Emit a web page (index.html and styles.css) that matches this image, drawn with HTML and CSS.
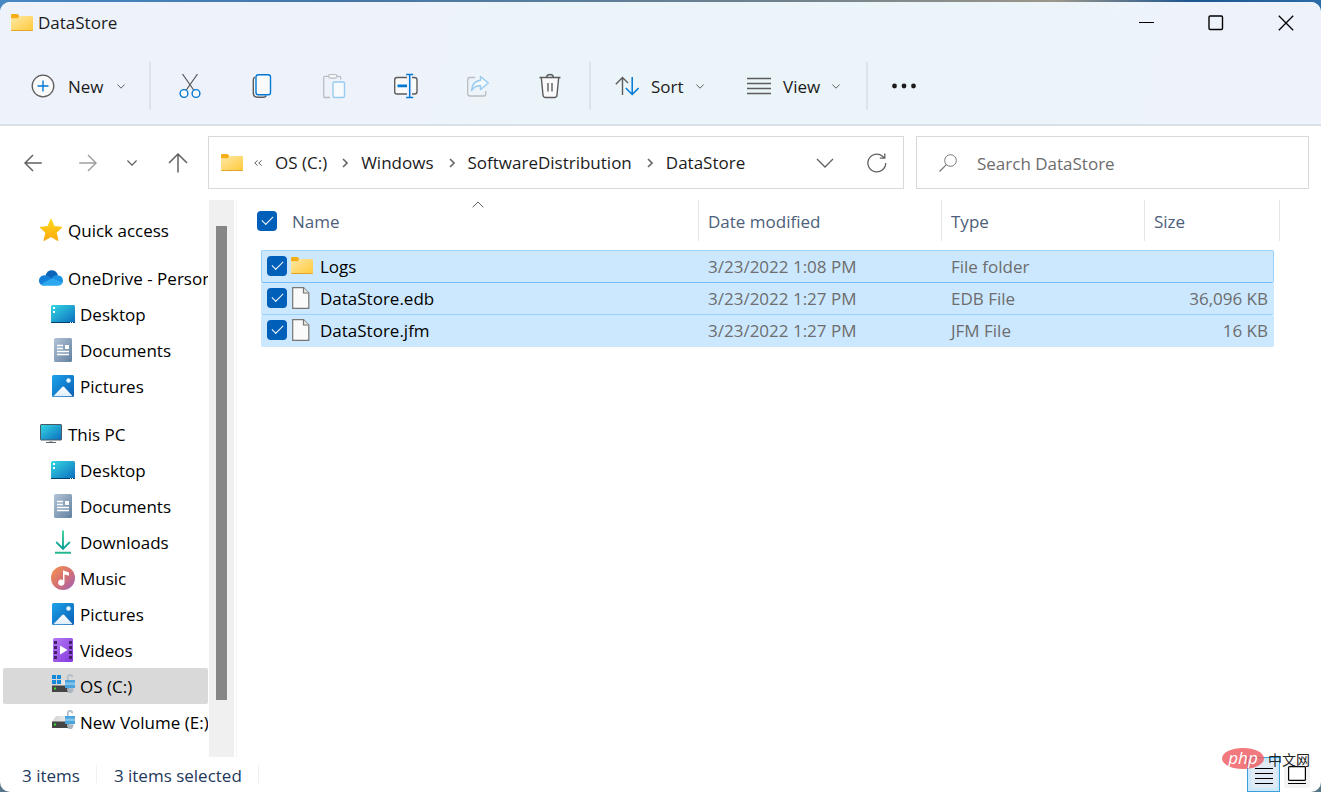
FILE: index.html
```html
<!DOCTYPE html>
<html lang="en">
<head>
<meta charset="utf-8">
<meta name="viewport" content="width=device-width, initial-scale=1">
<title>DataStore</title>
<link rel="stylesheet" href="styles.css">
</head>
<body>
<svg class="defs" aria-hidden="true">
  <defs>
    <linearGradient id="g-folder" x1="0" y1="0" x2="1" y2="1"><stop offset="0" stop-color="#ffe9a6"/><stop offset="1" stop-color="#ffc93a"/></linearGradient>
    <linearGradient id="g-star" x1="0" y1="0" x2="0" y2="1"><stop offset="0" stop-color="#ffd91c"/><stop offset="1" stop-color="#fba90f"/></linearGradient>
    <linearGradient id="g-desk" x1="0" y1="0" x2="1" y2="1"><stop offset="0" stop-color="#35d8e2"/><stop offset="1" stop-color="#0b6cbf"/></linearGradient>
    <linearGradient id="g-doc" x1="0" y1="0" x2="1" y2="1"><stop offset="0" stop-color="#b3c4d8"/><stop offset="1" stop-color="#61809f"/></linearGradient>
    <linearGradient id="g-pic" x1="0" y1="0" x2="1" y2="1"><stop offset="0" stop-color="#1ca3ea"/><stop offset="1" stop-color="#0a5db3"/></linearGradient>
    <linearGradient id="g-mount" x1="0" y1="0" x2="0" y2="1"><stop offset="0" stop-color="#fff"/><stop offset="1" stop-color="#dcedfa"/></linearGradient>
    <linearGradient id="g-down" gradientUnits="userSpaceOnUse" x1="0" y1="0" x2="0" y2="24"><stop offset="0" stop-color="#3fd09a"/><stop offset=".8" stop-color="#0a9f96"/><stop offset="1" stop-color="#2fc08f"/></linearGradient>
    <linearGradient id="g-music" x1="0" y1="0" x2="1" y2="1"><stop offset="0" stop-color="#f7954f"/><stop offset=".55" stop-color="#d26f74"/><stop offset="1" stop-color="#9c62c0"/></linearGradient>
    <linearGradient id="g-video" x1="0" y1="0" x2="1" y2="1"><stop offset="0" stop-color="#b57bf4"/><stop offset="1" stop-color="#8438dc"/></linearGradient>
    <linearGradient id="g-top" x1="0" y1="0" x2="1" y2="0"><stop offset="0" stop-color="#d2d2d2"/><stop offset="1" stop-color="#f3f3f3"/></linearGradient>

    <symbol id="i-folder" viewBox="0 0 22 17"><path d="M0 1.2Q0 0 1.2 0H6.6L8.4 2H8V5H0Z" fill="#f5ae17"/><path d="M0 4.2H6.6L8.8 2H21Q22 2 22 3V16Q22 17 21 17H1Q0 17 0 16Z" fill="url(#g-folder)"/><path d="M0 16H22Q22 17 21 17H1Q0 17 0 16Z" fill="#e5a42b"/></symbol>
    <symbol id="i-file" viewBox="0 0 18 22"><path d="M.7.7H11.5L16.8 6V21.3H.7Z" fill="#fafafa" stroke="#767672" stroke-width="1.2"/><path d="M11.5.7V6H16.8" fill="#e9e9e7" stroke="#767672" stroke-width="1.2"/></symbol>
    <symbol id="i-chev" viewBox="0 0 8 5"><path d="M.4.5 4 4.2 7.6.5" fill="none" stroke="currentColor"/></symbol>
    <symbol id="i-star" viewBox="0 0 24 24"><path d="M12 1 15.2 8.6 23 9.3 17.2 14.6 19 22.6 12 18.6 5 22.6 6.8 14.6 1 9.3 8.8 8.6Z" fill="url(#g-star)" stroke="url(#g-star)" stroke-linejoin="round"/></symbol>
    <symbol id="i-cloud" viewBox="0 0 24 16"><path d="M6.5 5.5C7.5 1.8 10.4 0 13.3.3c2.9.3 4.8 2.300 5.600 5L14 10Z" fill="#0c63b8"/><path d="M5 15.500C2 15.500 0 13.400 0 10.700 0 7.600 2.200 5.400 5 5.200c3-.2 5 1.200 8 3.300L5 15.500Z" fill="#1480d8"/><path d="M12.500 8.200C14 6.200 16 5 18.500 5.300 22 5.500 24 7.800 24 10.700c0 1-.3 2-.8 2.700Z" fill="#1a93e4"/><path d="M1.800 14.300 13 8.300 23.300 13.300C22.500 14.800 21.200 15.700 19.200 15.700H5C3.500 15.700 2.500 15.100 1.800 14.300Z" fill="#2ba8ee"/></symbol>
    <symbol id="i-desktop" viewBox="0 0 24 18"><rect width="24" height="18" rx="1.500" fill="url(#g-desk)"/><path d="M0 17H24V17.500Q23.500 18 22.500 18H1.500Q.5 18 0 17.500Z" fill="#073f6b"/><path d="M2 2h2v2H2zM2 6h2v2H2zM19 17h1v1h-1zM21 17h1v1h-1z" fill="#fff"/></symbol>
    <symbol id="i-doc" viewBox="0 0 18 24"><rect width="18" height="24" rx="1.500" fill="url(#g-doc)"/><path d="M3 7.500H9M3 10.500H9M3 13.500H15M3 16.500H15" stroke="#fff" stroke-width="1.300"/><path d="M11 7h4v4h-4z" fill="#fff"/></symbol>
    <symbol id="i-pic" viewBox="0 0 22 22"><rect width="22" height="22" rx="1.500" fill="url(#g-pic)"/><path d="M1.500 21 10 12.200Q11.200 11 12.400 12.200L20.500 21Q20.400 21.300 20 21.300H2Z" fill="url(#g-mount)"/><circle cx="16.500" cy="5.500" r="2.200" fill="#e9f6ff"/></symbol>
    <symbol id="i-pc" viewBox="0 0 22 20"><rect x=".5" y=".5" width="21" height="15.500" rx=".6" fill="url(#g-desk)" stroke="#4b5965"/><path d="M9 16.500h4v2H9z" fill="#b5b9bd"/><path d="M6 18.500H16" stroke="#5b6268" stroke-width="1.200"/></symbol>
    <symbol id="i-down" viewBox="0 0 16 24"><path d="M8 .5V19M1.200 12 8 18.800 14.800 12M0 22.800H16" fill="none" stroke="url(#g-down)" stroke-width="1.900"/></symbol>
    <symbol id="i-music" viewBox="0 0 24 24"><circle cx="12" cy="12" r="12" fill="url(#g-music)"/><path d="M12 4.200 18 6.500V9.800L13.500 8.400V16.500A3.200 3.200 0 1 1 12 13.900Z" fill="#fff"/></symbol>
    <symbol id="i-video" viewBox="0 0 20 24"><rect width="20" height="24" rx="1.500" fill="url(#g-video)"/><path d="M1 3h3v3H1zM1 8h3v3H1zM1 13h3v3H1zM1 18h3v3H1zM16 3h3v3h-3zM16 8h3v3h-3zM16 13h3v3h-3zM16 18h3v3h-3z" fill="#442166"/><path d="M7 7.500 14.500 12 7 16.500Z" fill="#fff"/></symbol>
    <symbol id="i-drive" viewBox="0 0 24 20"><path d="M5 6H17L20 12H1Z" fill="url(#g-top)"/><path d="M1 11.500H18V18H1Z" fill="#454545"/><path d="M3 13.500h2v2H3z" fill="#30e52b"/><path d="M16.800 6V3.200Q16.800 1 19 1T21.200 3.200" fill="none" stroke="#b5bfc8" stroke-width="1.800"/><path d="M14 6H24V14H14Z" fill="#4aa5de"/><path d="M14 8.500H24V11H14Z" fill="#84c3e8"/><path d="M16 14.200H22.500V16L21 19H17.500L16 16Z" fill="#a9b5bf"/></symbol>
    <symbol id="i-win" viewBox="0 0 10 10"><path d="M0 0h4.500v4.500H0zM5.500 0H10v4.500H5.500zM0 5.500h4.500V10H0zM5.500 5.500H10V10H5.500z" fill="#168ad8"/></symbol>
  </defs>
</svg>

<div class="window">
  <header class="chrome">
    <div class="titlebar">
      <svg class="ico-folder"><use href="#i-folder"/></svg>
      <h1 class="title">DataStore</h1>
      <div class="win-controls">
        <button class="win-btn" aria-label="Minimize"><svg width="16" height="16"><path d="M1 7.500H16" stroke="#000"/></svg></button>
        <button class="win-btn" aria-label="Maximize"><svg width="16" height="16"><rect x="1" y="1" width="13.500" height="13.500" rx="1.200" fill="none" stroke="#000" stroke-width="1.400"/></svg></button>
        <button class="win-btn" aria-label="Close"><svg width="16" height="16"><path d="M.8.8 15.200 15.200M15.200.8.8 15.200" stroke="#000" stroke-width="1.300"/></svg></button>
      </div>
    </div>
    <div class="toolbar">
      <button class="cmd cmd-new"><svg width="24" height="24"><circle cx="12" cy="12" r="10.800" fill="#fafafa" stroke="#5c5c5c" stroke-width="1.300"/><path d="M12 6.500V17.500M6.500 12H17.500" stroke="#0078d4" stroke-width="1.400"/></svg><span>New</span><svg class="chev"><use href="#i-chev"/></svg></button>
      <span class="sep"></span>
      <div class="cmd-group">
        <button class="icon-cmd" aria-label="Cut"><svg width="24" height="26"><path d="M4.500 1 15.700 17M19.500 1 8.300 17" fill="none" stroke="#5c5c5c" stroke-width="1.300"/><g fill="#fafafa" stroke="#0078d4" stroke-width="1.400"><circle cx="6" cy="20.500" r="3.900"/><circle cx="18" cy="20.500" r="3.900"/></g></svg></button>
        <button class="icon-cmd" aria-label="Copy"><svg width="24" height="26"><path d="M5 4.200Q3.300 5 3.300 7V20Q3.300 24.200 7.500 24.200H13.500Q15.500 24.200 16.200 22.600" fill="none" stroke="#5c5c5c" stroke-width="1.400"/><rect x="6" y="1.700" width="14.500" height="20" rx="2.300" fill="#fafafa" stroke="#0078d4" stroke-width="1.400"/></svg></button>
        <button class="icon-cmd" aria-label="Paste" disabled><svg width="24" height="26"><path d="M8 24.500H3Q1.700 24.500 1.700 23.200V4.700Q1.700 3.400 3 3.400H6.500M15 3.400H17.500Q18.800 3.400 18.800 4.700V6.500" fill="none" stroke="#b9bdc1" stroke-width="1.300"/><rect x="6.600" y="1.500" width="8.400" height="3.600" rx="1.800" fill="#f5f7fa" stroke="#b9bdc1" stroke-width="1.200"/><rect x="11" y="9" width="11.500" height="15.500" rx="1.500" fill="#f6fafd" stroke="#98cbf0" stroke-width="1.400"/></svg></button>
        <button class="icon-cmd" aria-label="Rename"><svg width="26" height="26"><path d="M14 4.500H4Q1.700 4.500 1.700 6.800V18.700Q1.700 21 4 21H14M19 4.500H21.500Q24 4.500 24 7V18.500Q24 21 21.500 21H19" fill="#fafafa" stroke="#5c5c5c" stroke-width="1.400"/><path d="M4.500 12.800H14" stroke="#0078d4" stroke-width="2.800"/><path d="M13.200 1.500H20.200M16.700 1.500V24.500M13.200 24.500H20.200" stroke="#0078d4" stroke-width="1.500"/></svg></button>
        <button class="icon-cmd" aria-label="Share" disabled><svg width="24" height="26"><path d="M9 4.500H4Q1.700 4.500 1.700 6.800V20.700Q1.700 23 4 23H17.500Q19.800 23 19.800 20.700V18" fill="none" stroke="#b9bdc1" stroke-width="1.300"/><path d="M14.500 3.500 22.300 10 14.500 16.500V12.800Q9 12.500 5.500 17.500Q6.500 8 14.500 7.200Z" fill="#f4f9fc" stroke="#98cbf0" stroke-width="1.400" stroke-linejoin="round"/></svg></button>
        <button class="icon-cmd" aria-label="Delete"><svg width="24" height="26"><path d="M3.300 4.500 5 22Q5.200 24.500 7.500 24.500H16.500Q18.800 24.500 19 22L20.700 4.500" fill="#fafafa" stroke="#5c5c5c" stroke-width="1.400"/><path d="M1.500 4.500H22.500M8.600 4Q9 1.500 12 1.500T15.400 4M10 10V18.500M14 10V18.500" fill="none" stroke="#5c5c5c" stroke-width="1.400"/></svg></button>
      </div>
      <span class="sep"></span>
      <button class="cmd cmd-sort"><svg width="24" height="20"><path d="M7.500 19V1.500M.8 8.300 7.500 1.500 13 7" fill="none" stroke="#5c5c5c" stroke-width="1.400"/><path d="M17.200 1V18.500M10.800 12 17.200 18.500 23.600 12" fill="none" stroke="#0078d4" stroke-width="1.500"/></svg><span>Sort</span><svg class="chev"><use href="#i-chev"/></svg></button>
      <button class="cmd cmd-view"><svg width="24" height="20"><path d="M0 2.500H24M0 7.500H24M0 12.500H24M0 17.500H24" stroke="#5c5c5c" stroke-width="1.300"/></svg><span>View</span><svg class="chev"><use href="#i-chev"/></svg></button>
      <span class="sep"></span>
      <button class="more" aria-label="See more"><svg width="24" height="6"><g fill="#1b1b1b"><circle cx="2.500" cy="3" r="2.400"/><circle cx="12" cy="3" r="2.400"/><circle cx="21.500" cy="3" r="2.400"/></g></svg></button>
    </div>
  </header>

  <div class="navrow">
    <div class="nav-buttons">
      <button aria-label="Back"><svg width="18" height="18"><path d="M17.800 9H1M9 1 1 9 9 17" fill="none" stroke="#606060" stroke-width="1.500"/></svg></button>
      <button aria-label="Forward"><svg width="18" height="18"><path d="M.2 9H17M9 1 17 9 9 17" fill="none" stroke="#a0a0a0" stroke-width="1.500"/></svg></button>
      <button aria-label="Recent locations"><svg width="10" height="6"><path d="M.4.5 5 5.200 9.600.5" fill="none" stroke="#606060" stroke-width="1.200"/></svg></button>
      <button aria-label="Up"><svg width="20" height="20"><path d="M10 19.500V1M1 10 10 1 19 10" fill="none" stroke="#606060" stroke-width="1.500"/></svg></button>
    </div>
    <nav class="address" aria-label="Address">
      <svg class="ico-folder"><use href="#i-folder"/></svg>
      <svg class="overflow" width="8" height="6"><path d="M3.600.4.800 3 3.600 5.600M7.600.4 4.800 3 7.600 5.600" fill="none" stroke="#606060"/></svg>
      <a href="#" class="crumb">OS (C:)</a>
      <svg class="crumb-sep" width="6" height="10"><path d="M1 1 5 5 1 9" fill="none" stroke="#686868" stroke-width="1.600"/></svg>
      <a href="#" class="crumb">Windows</a>
      <svg class="crumb-sep" width="6" height="10"><path d="M1 1 5 5 1 9" fill="none" stroke="#686868" stroke-width="1.600"/></svg>
      <a href="#" class="crumb">SoftwareDistribution</a>
      <svg class="crumb-sep" width="6" height="10"><path d="M1 1 5 5 1 9" fill="none" stroke="#686868" stroke-width="1.600"/></svg>
      <a href="#" class="crumb">DataStore</a>
      <button class="addr-btn addr-drop" aria-label="Previous locations"><svg width="18" height="10"><path d="M1 1 9 9 17 1" fill="none" stroke="#606060" stroke-width="1.300"/></svg></button>
      <button class="addr-btn" aria-label="Refresh"><svg width="20" height="20"><path d="M18.700 10A8.900 8.900 0 1 1 15.500 3.200L17.500 5M17.800.5V5.200H12.800" fill="none" stroke="#606060" stroke-width="1.300"/></svg></button>
    </nav>
    <label class="search">
      <svg width="18" height="18"><circle cx="11.500" cy="6.500" r="5.800" fill="none" stroke="#777" /><path d="M7.400 10.600.5 17.500" stroke="#777" stroke-width="1.200"/></svg>
      <input type="text" placeholder="Search DataStore" aria-label="Search DataStore">
    </label>
  </div>

  <div class="body">
    <nav class="sidebar" aria-label="Folders">
      <ul class="tree">
        <li><a href="#" class="node root"><svg width="24" height="24"><use href="#i-star"/></svg><span>Quick access</span></a></li>
      </ul>
      <ul class="tree">
        <li><a href="#" class="node root"><svg width="24" height="16"><use href="#i-cloud"/></svg><span>OneDrive - Personal</span></a></li>
        <li><a href="#" class="node"><svg width="24" height="18"><use href="#i-desktop"/></svg><span>Desktop</span></a></li>
        <li><a href="#" class="node"><svg width="24" height="24"><use href="#i-doc"/></svg><span>Documents</span></a></li>
        <li><a href="#" class="node"><svg width="24" height="22"><use href="#i-pic"/></svg><span>Pictures</span></a></li>
      </ul>
      <ul class="tree">
        <li><a href="#" class="node root"><svg width="24" height="20"><use href="#i-pc"/></svg><span>This PC</span></a></li>
        <li><a href="#" class="node"><svg width="24" height="18"><use href="#i-desktop"/></svg><span>Desktop</span></a></li>
        <li><a href="#" class="node"><svg width="24" height="24"><use href="#i-doc"/></svg><span>Documents</span></a></li>
        <li><a href="#" class="node"><svg width="24" height="24"><use href="#i-down"/></svg><span>Downloads</span></a></li>
        <li><a href="#" class="node"><svg width="24" height="24"><use href="#i-music"/></svg><span>Music</span></a></li>
        <li><a href="#" class="node"><svg width="24" height="22"><use href="#i-pic"/></svg><span>Pictures</span></a></li>
        <li><a href="#" class="node"><svg width="24" height="24"><use href="#i-video"/></svg><span>Videos</span></a></li>
        <li><a href="#" class="node current"><svg width="24" height="24"><use href="#i-drive" width="24" height="20"/><use href="#i-win" x="1" y="1" width="9" height="9"/></svg><span>OS (C:)</span></a></li>
        <li><a href="#" class="node"><svg width="24" height="24"><use href="#i-drive" width="24" height="20"/></svg><span>New Volume (E:)</span></a></li>
      </ul>
    </nav>
    <div class="scrollbar"><div class="thumb"></div></div>
    <main class="content">
      <table class="files">
        <thead>
          <tr>
            <th class="col-name"><div class="head"><input type="checkbox" class="check" checked aria-label="Select all"><span>Name</span><svg class="sort-mark" width="12" height="7"><path d="M.7 6.300 6 1 11.300 6.300" fill="none" stroke="#606060"/></svg></div></th>
            <th class="col-date"><div class="head"><span>Date modified</span></div></th>
            <th class="col-type"><div class="head"><span>Type</span></div></th>
            <th class="col-size"><div class="head last"><span>Size</span></div></th>
          </tr>
        </thead>
        <tbody>
          <tr class="focused">
            <td><div class="file"><input type="checkbox" class="check" checked aria-label="Select Logs"><svg class="ico-folder"><use href="#i-folder"/></svg><span>Logs</span></div></td>
            <td>3/23/2022 1:08 PM</td><td>File folder</td><td class="num"></td>
          </tr>
          <tr>
            <td><div class="file"><input type="checkbox" class="check" checked aria-label="Select DataStore.edb"><svg class="ico-file"><use href="#i-file"/></svg><span>DataStore.edb</span></div></td>
            <td>3/23/2022 1:27 PM</td><td>EDB File</td><td class="num">36,096 KB</td>
          </tr>
          <tr>
            <td><div class="file"><input type="checkbox" class="check" checked aria-label="Select DataStore.jfm"><svg class="ico-file"><use href="#i-file"/></svg><span>DataStore.jfm</span></div></td>
            <td>3/23/2022 1:27 PM</td><td>JFM File</td><td class="num">16 KB</td>
          </tr>
        </tbody>
      </table>
    </main>
  </div>

  <footer class="status">
    <span class="stat stat-count">3 items</span>
    <span class="stat">3 items selected</span>
    <div class="view-modes">
      <button class="mode active" aria-label="Details"><svg width="26" height="26"><rect width="26" height="26" rx="3" fill="#dfeaf5"/><path d="M4 6.500H22M4 11.500H22M4 16.500H22M4 21.500H22" stroke="#000"/></svg></button>
      <button class="mode" aria-label="Large icons"><svg width="26" height="26"><rect width="26" height="26" rx="3" fill="#f3f3f3"/><rect x="4.600" y="4.600" width="16.800" height="13.800" rx="1" fill="#fff" stroke="#000" stroke-width="1.200"/><path d="M4 21.500H22" stroke="#000"/></svg></button>
    </div>
  </footer>
  <div class="watermark"><span class="wm-php">php</span><span class="wm-cn">中文网</span></div>
</div>
</body>
</html>
```
FILE: styles.css
```css
* { box-sizing: border-box; }

body {
  margin: 0;
  padding-top: 2px;
  height: 100vh;
  font: 17px/24px "Open Sans", "Noto Sans", sans-serif;
  color: #1b1b1b;
  background: linear-gradient(90deg, #4687c4, #4377a8 25%, #71828c 60%, #9c9689 80%, #1d568f 90%, #2a6ba8) top / 100% 40px no-repeat, #587689;
}

button { padding: 0; border: 0; background: none; font: inherit; color: inherit; display: flex; align-items: center; justify-content: center; }
a { color: inherit; text-decoration: none; }
svg { display: block; flex: none; }
.defs { position: absolute; width: 0; height: 0; }

.window { position: relative; display: flex; flex-direction: column; height: 100%; background: #fff; border-radius: 10px; overflow: hidden; }

.chrome { background: linear-gradient(100deg, #eef3fb 0%, #eef3fb 32%, #ebf4f8 40%, #ebf4f8 76%, #eef3fb 90%); border-bottom: 2px solid #dae1e6; }
.titlebar { display: flex; align-items: center; height: 42px; padding-left: 11px; }
.title { margin: 0 0 0 5px; font: inherit; }
.ico-folder { width: 22px; height: 17px; }
.titlebar .ico-folder { margin-bottom: 2px; }
.ico-file { width: 18px; height: 22px; }
.win-controls { display: flex; margin-left: auto; }
.win-btn { width: 70px; height: 42px; }

.toolbar { display: flex; align-items: center; height: 80px; padding: 4px 0 0 31px; }
.cmd { gap: 12px; justify-content: flex-start; }
.cmd span { padding-top: 2px; }
.cmd-new { width: 92px; gap: 13px; }
.cmd-sort { width: 89px; margin-left: 24px; }
.cmd-view { width: 93px; margin-left: 43px; }
.chev { width: 8px; height: 5px; margin-left: auto; color: #606060; }
.sep { width: 2px; height: 48px; background: #dde4ea; }
.cmd + .sep { margin-left: 26px; }
.cmd-group { display: flex; padding: 0 3px; }
.icon-cmd { width: 72px; height: 48px; }
.more { width: 72px; height: 48px; }

.navrow { display: grid; grid-template-columns: 208px minmax(0, 696fr) minmax(0, 405fr); padding: 10px 12px 11px 0; }
.nav-buttons { display: flex; align-items: center; padding-left: 5px; }
.nav-buttons button { flex: none; width: 55px; height: 40px; }
.nav-buttons button:nth-child(3) { width: 33px; }
.nav-buttons button:nth-child(4) { width: 59px; }
.address, .search { display: flex; align-items: center; height: 53px; border: 1px solid #d9d9d9; }
.address { padding: 0 16px 0 12px; }
.search { margin-left: 12px; padding-left: 22px; gap: 20px; }
.search input { flex: 1; min-width: 0; padding: 2px 0 0; border: 0; outline: 0; background: none; font: inherit; }
.search input::placeholder { color: #6d6d6d; opacity: 1; }
.overflow { margin: 0 13px 0 11px; }
.crumb { white-space: nowrap; }
.crumb-sep { margin: 0 13px 0 15px; }
.addr-btn { width: 20px; height: 40px; }
.addr-drop { margin: 0 32px 0 auto; }

.body { display: flex; flex: 1; min-height: 0; }
.sidebar { width: 209px; padding: 12px 1px 0 3px; overflow: hidden; color: #000; }
.tree { list-style: none; margin: 0 0 12px; padding: 0; }
.node { display: flex; align-items: center; gap: 5px; height: 36px; padding-left: 48px; border-radius: 2px; white-space: nowrap; overflow: hidden; }
.node span { padding-top: 2px; }
.root { padding-left: 36px; }
.current { background: #d9d9d9; }
.scrollbar { width: 25px; padding: 26px 7px 57px; background: #f0f0f0; }
.thumb { height: 100%; background: #868686; }
.content { flex: 1; min-width: 0; margin-left: 2px; padding: 0 47px 0 24px; border-left: 1px solid #f5f5f5; }

.files { width: 100%; table-layout: fixed; border-collapse: separate; border-spacing: 0; color: #6d6d6d; }
.files th { padding: 0 0 9px; text-align: left; font-weight: 400; color: #4c607a; }
.head { position: relative; display: flex; align-items: center; height: 41px; padding-left: 9px; border-right: 1px solid #e5e5e5; }
.head span { padding-top: 2px; }
.col-date { width: 243px; }
.col-type { width: 203px; }
.col-size { width: 129px; }
.head.last { margin-right: -6px; }
.col-name .head { padding-left: 0; gap: 15px; }
.col-name .check { margin-left: -4px; }
.sort-mark { position: absolute; top: 1px; left: calc(50% - 8px); }
.files td { height: 32px; padding: 0 0 0 9px; background: #cce8ff; border-bottom: 1px solid #99d1ff; }
.files tr:last-child td { border-bottom-color: #cce8ff; }
.files td:first-child { padding-left: 6px; border-radius: 2px 0 0 2px; }
.files td:last-child { border-radius: 0 2px 2px 0; }
.files td.num { padding-right: 6px; text-align: right; }
.files .focused td { height: 33px; border-top: 1px solid #99d1ff; border-bottom-color: #77bffa; }
.files .focused td:first-child { padding-left: 5px; border-left: 1px solid #99d1ff; }
.focused td:last-child { border-right: 1px solid #99d1ff; }
.file { display: flex; align-items: center; gap: 4px; color: #000; }
.file .check { margin-bottom: 2px; }
.file .ico-folder { margin: 0 3px 2px 0; }
.file .ico-file { margin: 0 6px 2px 1px; }

.check { appearance: none; display: grid; place-items: center; flex: none; width: 20px; height: 20px; margin: 0; border-radius: 4px; background: #005fb8; }
.check::after { content: ""; width: 10px; height: 5px; margin-bottom: 3px; border: solid #fff; border-width: 0 0 1px 1px; transform: rotate(-45deg); }

.status { display: flex; align-items: stretch; height: 35px; color: #1e395b; }
.stat { padding: 7px 17px 0 17px; background: linear-gradient(#f0f0f0, #f0f0f0) right 8px / 1px 18px no-repeat; }
.stat-count { padding-left: 22px; }
.view-modes { display: flex; margin-left: auto; padding-right: 8px; }
.mode { width: 33px; }
.mode.active { background: #cce8ff; border: 1px solid #3c9fd8; }

.watermark { position: absolute; right: 11px; bottom: 23px; display: flex; align-items: center; gap: 4px; }
.wm-php { width: 42px; height: 21px; border-radius: 50%; background: rgba(238, 88, 92, .8); color: #fff; font: italic 17px/19px "Open Sans", sans-serif; text-align: center; }
.wm-cn { font: 14px/20px "Noto Sans CJK SC", sans-serif; color: #222; }
```
